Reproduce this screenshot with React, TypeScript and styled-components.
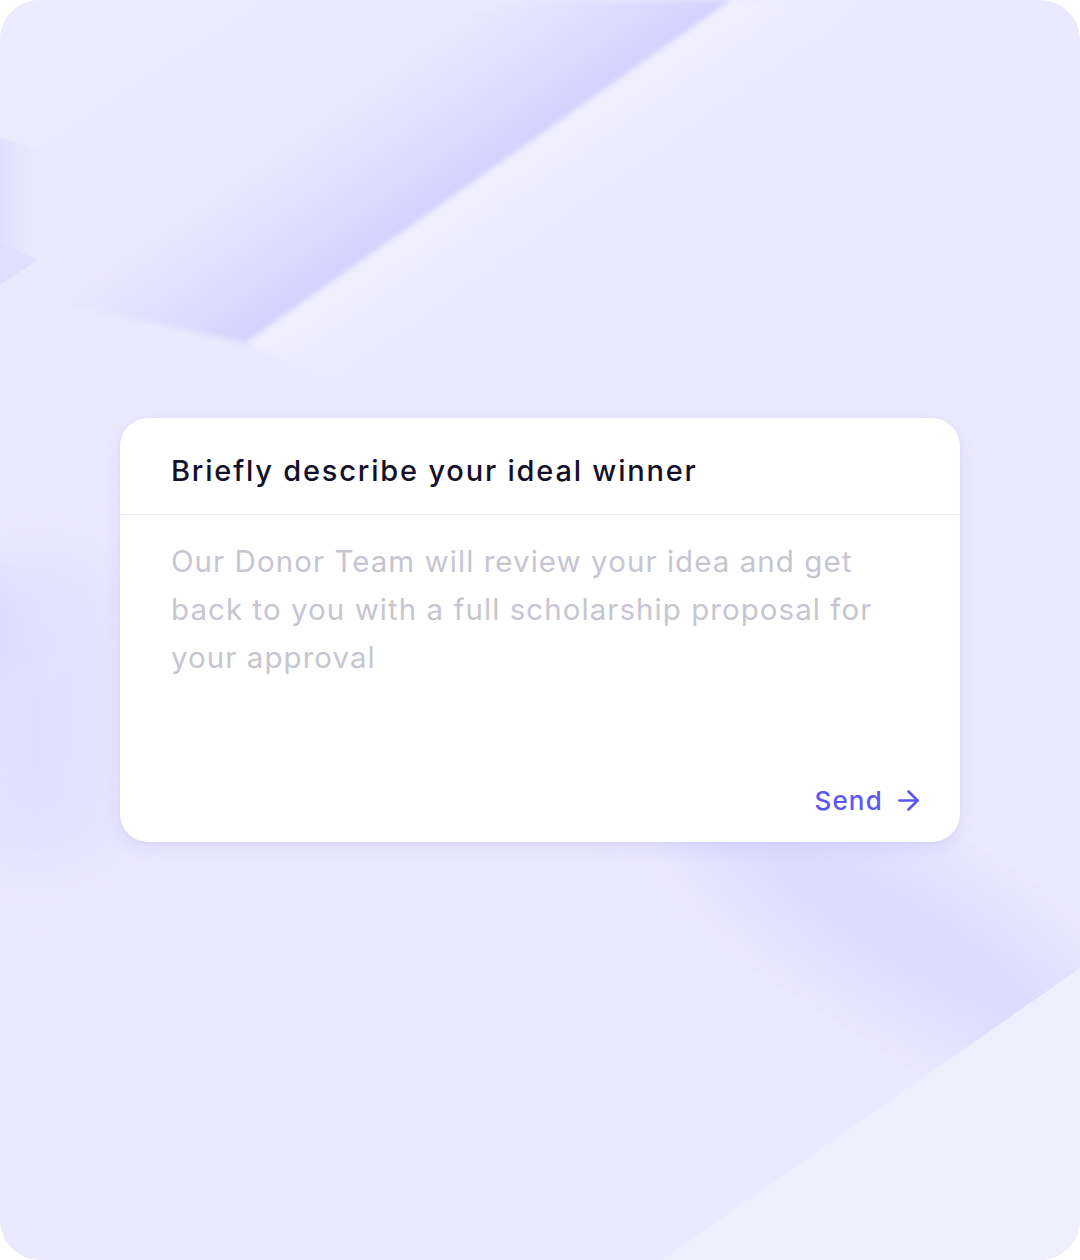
import React from 'react'
import styled, { createGlobalStyle } from 'styled-components'
import { ArrowRight } from 'lucide-react'

const GlobalStyle = createGlobalStyle`
  html, body {
    margin: 0;
    padding: 0;
    background: #fff;
  }
  * {
    box-sizing: border-box;
  }
`

const Frame = styled.div`
  position: relative;
  width: 1080px;
  height: 1260px;
  border-radius: 40px;
  overflow: hidden;
  background: #ebe9fe;
  display: flex;
  flex-direction: column;
  align-items: center;
  padding-top: 418px;
`

const Backdrop = styled.svg`
  position: absolute;
  inset: 0;
  width: 100%;
  height: 100%;
  z-index: 0;
`

const Card = styled.div`
  position: relative;
  z-index: 1;
  width: 840px;
  height: 424px;
  background: #fff;
  border-radius: 28px;
  box-shadow: 0 6px 18px rgba(120, 110, 220, 0.12), 0 1px 3px rgba(120, 110, 220, 0.08);
  display: flex;
  flex-direction: column;
`

const CardHeader = styled.div`
  height: 97px;
  padding: 0 51px;
  display: flex;
  align-items: center;
  border-bottom: 1.5px solid #e8e7ee;
`

const Title = styled.h2`
  margin: 0;
  padding-top: 8px;
  font-family: Inter, 'Liberation Sans', sans-serif;
  font-size: 29px;
  font-weight: 500;
  color: #141029;
  letter-spacing: 1.8px;
`

const Message = styled.textarea`
  flex: 1;
  margin: 0;
  border: none;
  outline: none;
  resize: none;
  background: transparent;
  padding: 22px 51px 0;
  font-family: Inter, 'Liberation Sans', sans-serif;
  font-size: 29.5px;
  font-weight: 400;
  line-height: 48px;
  letter-spacing: 1.05px;
  color: #141029;

  &::placeholder {
    color: #c6c5d0;
  }
`

const Footer = styled.div`
  display: flex;
  justify-content: flex-end;
  padding: 0 36px 26px;
`

const SendButton = styled.button`
  display: flex;
  align-items: center;
  gap: 10px;
  border: none;
  background: none;
  padding: 0;
  cursor: pointer;
  font-family: Inter, 'Liberation Sans', sans-serif;
  font-size: 26px;
  font-weight: 500;
  letter-spacing: 1.2px;
  color: #5d57f2;
`

const Scenery = () => (
  <Backdrop viewBox="0 0 1080 1260" preserveAspectRatio="none">
    <defs>
      <linearGradient id="beam" gradientUnits="userSpaceOnUse" x1="490" y1="171" x2="380" y2="15">
        <stop offset="0" stopColor="#d3d0fe" stopOpacity="1" />
        <stop offset="0.5" stopColor="#dedcfe" stopOpacity="0.6" />
        <stop offset="1" stopColor="#ebe9fe" stopOpacity="0" />
      </linearGradient>
      <linearGradient id="beamEdge" gradientUnits="userSpaceOnUse" x1="490" y1="171" x2="560" y2="270">
        <stop offset="0" stopColor="#f1f0ff" stopOpacity="0.9" />
        <stop offset="1" stopColor="#ebe9fe" stopOpacity="0" />
      </linearGradient>
      <linearGradient id="corner" x1="0" y1="0" x2="1" y2="1">
        <stop offset="0" stopColor="#edecfe" />
        <stop offset="1" stopColor="#ebe9fe" />
      </linearGradient>
      <linearGradient id="strip" x1="0" y1="0" x2="1" y2="0">
        <stop offset="0" stopColor="#e0defe" />
        <stop offset="1" stopColor="#ebe9fe" />
      </linearGradient>
      <radialGradient id="sideGlow" cx="0" cy="0.5" r="1">
        <stop offset="0" stopColor="#c5c1fd" stopOpacity="0.95" />
        <stop offset="1" stopColor="#ebe9fe" stopOpacity="0" />
      </radialGradient>
      <filter id="soft" x="-30%" y="-30%" width="160%" height="160%">
        <feGaussianBlur stdDeviation="40" />
      </filter>
      <filter id="haze" x="-10%" y="-10%" width="120%" height="120%">
        <feGaussianBlur stdDeviation="3" />
      </filter>
    </defs>

    {/* pale wedge in the top-left corner */}
    <polygon points="0,0 268,0 38,150 0,137" fill="url(#corner)" />
    <polygon points="0,137 38,150 38,260 0,243" fill="url(#strip)" opacity="0.8" />
    <polygon points="0,243 38,260 0,285" fill="#dcdafe" opacity="0.7" />

    {/* main diagonal beam */}
    <polygon points="733,0 247,343 0,290 0,170 520,0" fill="url(#beam)" filter="url(#haze)" />
    <polygon points="733,0 900,0 420,420 247,343" fill="url(#beamEdge)" filter="url(#haze)" />

    {/* lilac haze down the left edge */}
    <rect x="-40" y="560" width="150" height="300" fill="#dedcfe" opacity="0.8" filter="url(#soft)" />
    <ellipse cx="0" cy="632" rx="80" ry="70" fill="url(#sideGlow)" />

    {/* lower right shading and light wedge */}
    <ellipse cx="900" cy="930" rx="260" ry="70" transform="rotate(32 900 930)" fill="#d9d6fe" opacity="0.8" filter="url(#soft)" />
    <polygon points="1080,968 662,1260 1080,1260" fill="#efeefd" />
  </Backdrop>
)

const App: React.FunctionComponent = () => {
  const [text, setText] = React.useState('')

  return (
    <>
      <GlobalStyle />
      <Frame>
        <Scenery />
        <Card>
          <CardHeader>
            <Title>Briefly describe your ideal winner</Title>
          </CardHeader>
          <Message
            value={text}
            onChange={(e) => setText(e.target.value)}
            placeholder="Our Donor Team will review your idea and get back to you with a full scholarship proposal for your approval"
          />
          <Footer>
            <SendButton type="button">
              Send
              <ArrowRight size={31} strokeWidth={2.1} />
            </SendButton>
          </Footer>
        </Card>
      </Frame>
    </>
  )
}

export default App
